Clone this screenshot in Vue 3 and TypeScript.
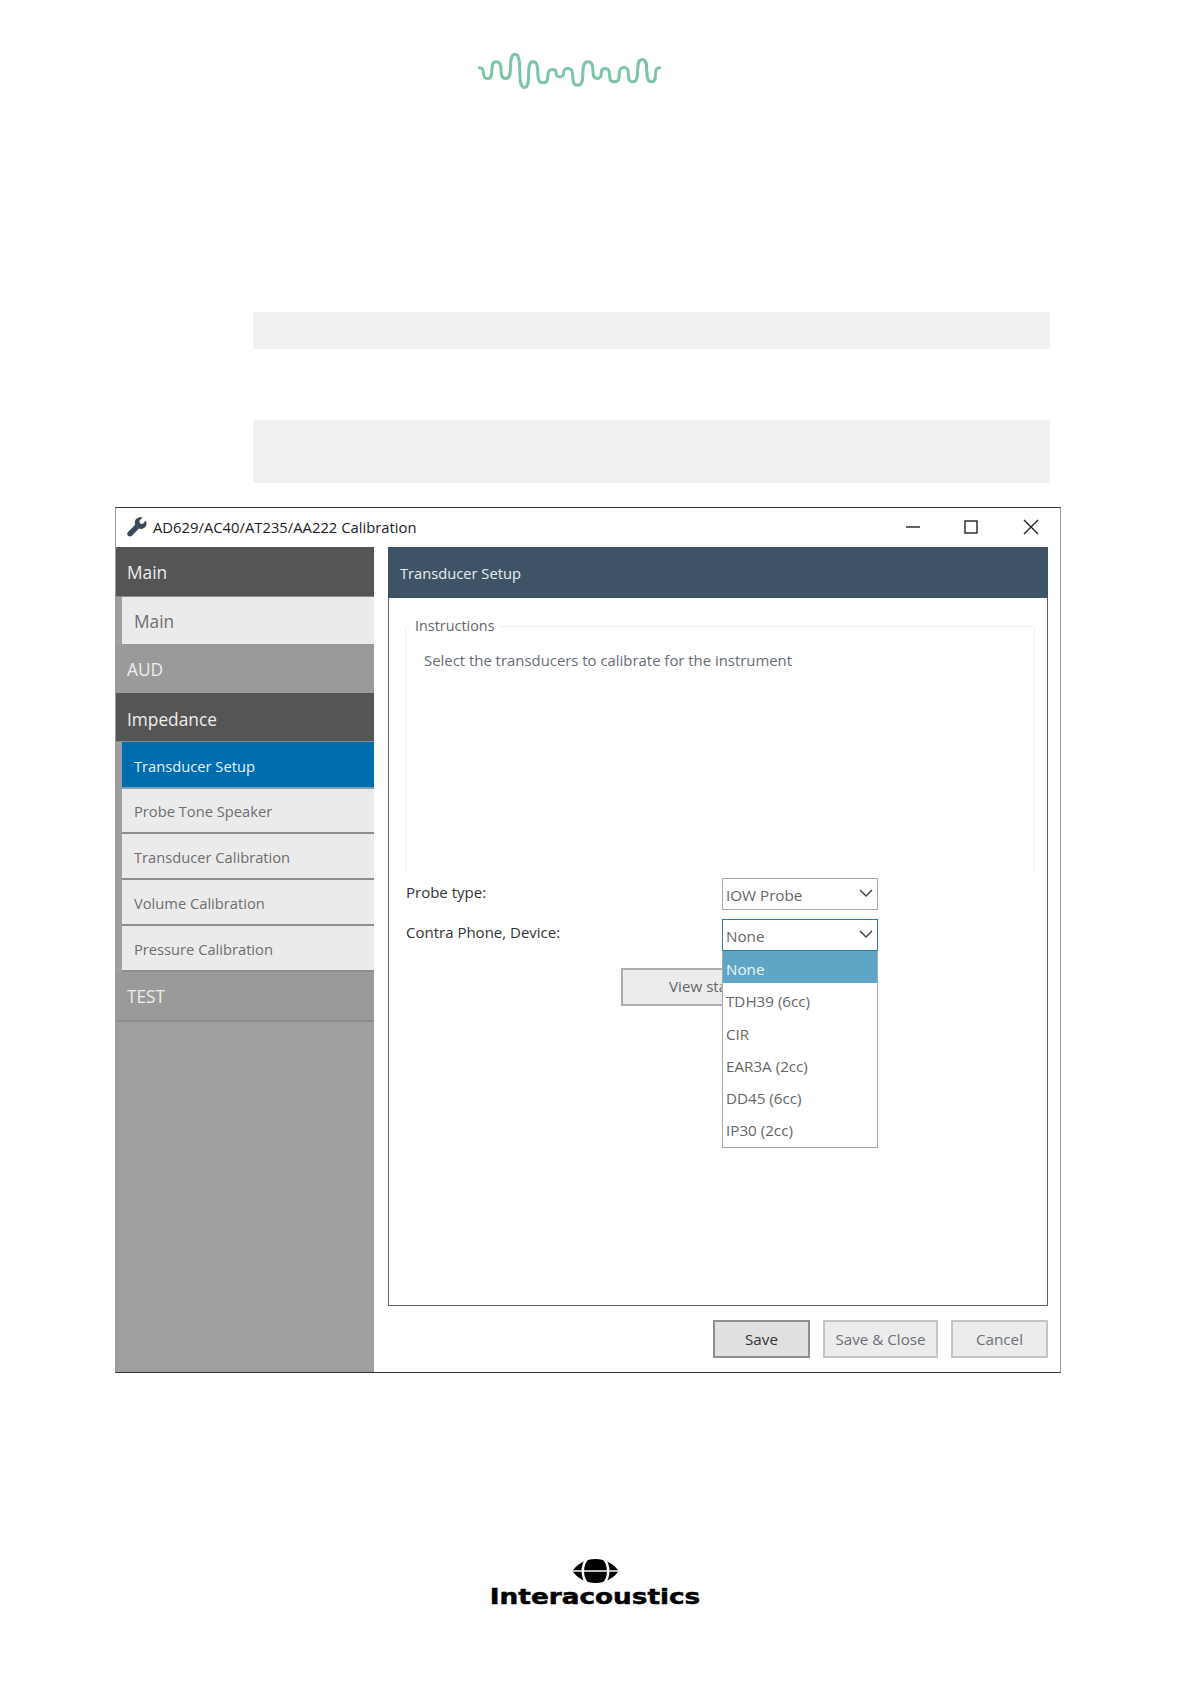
<script setup lang="ts">
const navItems = [
  { label: 'Main', kind: 'head' },
  { label: 'Main', kind: 'item big', h: 48 },
  { label: 'AUD', kind: 'group' },
  { label: 'Impedance', kind: 'head imp' },
  { label: 'Transducer Setup', kind: 'item active', h: 47 },
  { label: 'Probe Tone Speaker', kind: 'item', h: 45 },
  { label: 'Transducer Calibration', kind: 'item', h: 46 },
  { label: 'Volume Calibration', kind: 'item', h: 46 },
  { label: 'Pressure Calibration', kind: 'item', h: 46 },
  { label: 'TEST', kind: 'group test' },
]
const options = ['None', 'TDH39 (6cc)', 'CIR', 'EAR3A (2cc)', 'DD45 (6cc)', 'IP30 (2cc)']

const wave: [number, number][] = [
  [115, 113], [140, 145], [165, 95], [195, 145], [222, 72], [250, 172], [275, 95], [305, 158],
  [335, 118], [355, 140], [380, 115], [410, 165], [440, 95], [470, 145], [490, 115], [520, 155],
  [548, 112], [575, 155], [603, 88], [630, 155], [655, 113],
]
const wavePath = wave.reduce((d, [x, y], i) => {
  if (i === 0) return `M${x} ${y}`
  const [px, py] = wave[i - 1]
  const k = (x - px) * 0.95
  return `${d} C${px + k} ${py} ${x - k} ${y} ${x} ${y}`
}, '')
</script>

<template>
  <div class="page">
    <header class="top">
      <svg class="wave" viewBox="105 60 560 122" aria-hidden="true">
        <path :d="wavePath" fill="none" stroke="#7cc5a6" stroke-width="9" stroke-linecap="round" />
      </svg>
    </header>

    <div class="shade shade-a"></div>
    <div class="shade shade-b"></div>

    <section class="win">
      <div class="titlebar">
        <svg class="wrench" viewBox="0 0 24 24" aria-hidden="true">
          <path fill="#3c4a57" d="M22.6 4.6 18.7 8.5 15.6 7.7 14.8 4.6 18.7.7C16.2-.3 13.3.2 11.3 2.2 9.4 4.1 8.9 6.9 9.8 9.3L1.2 17.9C-.1 19.2-.1 21.2 1.2 22.5 2.5 23.8 4.5 23.8 5.8 22.5L14.4 13.9C16.8 14.8 19.6 14.3 21.5 12.4 23.5 10.4 24 7.1 22.6 4.6Z" />
        </svg>
        <span class="title">AD629/AC40/AT235/AA222 Calibration</span>
        <div class="winbtns">
          <svg viewBox="0 0 14 14"><path d="M0 7H14" /></svg>
          <svg viewBox="0 0 14 14"><rect x="1" y="1" width="12" height="12" /></svg>
          <svg class="close" viewBox="0 0 14 14"><path d="M0 0 14 14M14 0 0 14" /></svg>
        </div>
      </div>

      <div class="body">
        <nav class="side">
          <div
            v-for="(n, i) in navItems"
            :key="i"
            :class="['nav', n.kind]"
            :style="n.h ? { height: n.h + 'px' } : undefined"
          >
            <span>{{ n.label }}</span>
          </div>
        </nav>

        <div class="right">
          <div class="panel">
            <div class="panel-head">Transducer Setup</div>
            <div class="panel-body">
              <fieldset class="instr">
                <legend>Instructions</legend>
                <p>Select the transducers to calibrate for the instrument</p>
              </fieldset>

              <div class="rows">
                <div class="row">
                  <label>Probe type:</label>
                  <div class="select"><span>IOW Probe</span>
                    <svg viewBox="0 0 14 8"><path d="M1 1 7 7 13 1" /></svg>
                  </div>
                </div>
                <div class="row second">
                  <label>Contra Phone, Device:</label>
                  <div class="select open"><span>None</span>
                    <svg viewBox="0 0 14 8"><path d="M1 1 7 7 13 1" /></svg>
                    <ul class="menu">
                      <li v-for="(o, i) in options" :key="o" :class="{ sel: i === 0 }">{{ o }}</li>
                    </ul>
                  </div>
                </div>
                <button class="view">View status</button>
              </div>
            </div>
          </div>

          <div class="actions">
            <button class="btn save">Save</button>
            <button class="btn sc">Save &amp; Close</button>
            <button class="btn cancel">Cancel</button>
          </div>
        </div>
      </div>
    </section>

    <footer class="brand">
      <svg class="globe" viewBox="0 0 48 25" aria-hidden="true">
        <path fill="#000" d="M24 0C35 0 44 6 48 12.5 44 19 35 25 24 25 13 25 4 19 0 12.5 4 6 13 0 24 0Z" />
        <path fill="none" stroke="#fff" stroke-width="2.6" d="M16 -1C9 6 9 19 16 26M32 -1C39 6 39 19 32 26" />
        <path stroke="#fff" stroke-width="1.6" d="M0 12.5H48" />
      </svg>
      <div class="word">Interacoustics</div>
    </footer>
  </div>
</template>

<style>
html, body { margin: 0; background: #fff; }
</style>

<style scoped>
.page {
  width: 1191px;
  height: 1684px;
  background: #fff;
  overflow: hidden;
  font-family: "Open Sans", "Noto Sans", sans-serif;
  display: flex;
  flex-direction: column;
  align-items: center;
}
.top { height: 312px; width: 100%; position: relative; display: flex; padding-top: 50px; box-sizing: border-box; }
.wave { width: 187px; height: 41px; margin-left: 476px; }
.shade { width: 797px; background: #f1f1f1; margin-left: 111px; flex: none; }
.shade-a { height: 37px; }
.shade-b { height: 63px; margin-top: 71px; }

.win {
  margin-top: 24px;
  margin-left: -15px;
  width: 946px;
  height: 866px;
  box-sizing: border-box;
  border: 1px solid #9a9a9a;
  border-top-color: #30383a;
  border-bottom-color: #30383a;
  background: #fff;
  display: flex;
  flex-direction: column;
  flex: none;
}
.titlebar { height: 39px; display: flex; align-items: center; padding: 0 0 2px 10px; box-sizing: border-box; flex: none; }
.wrench { width: 22px; height: 20px; margin-right: 5px; }
.title { font-size: 14.8px; color: #222; }
.winbtns { margin-left: auto; display: flex; gap: 44px; padding-right: 22px; align-items: center; }
.winbtns svg { width: 14px; height: 14px; display: block; fill: none; stroke: #222; stroke-width: 1.4; overflow: visible; }
.winbtns .close { margin-left: 2px; }

.body { flex: 1; display: flex; min-height: 0; }
.side { width: 258px; background: #9f9f9f; flex: none; display: flex; flex-direction: column; }
.nav { display: flex; align-items: center; box-sizing: border-box; flex: none; }
.head { height: 50px; background: #555; color: #eee; font-size: 17.3px; padding: 2px 0 0 11px; border-bottom: 1px solid #8a8a8a; }
.head.imp { height: 49px; padding-top: 4px; }
.group { height: 48px; background: #9a9a9a; color: #eee; font-size: 17.3px; padding: 1px 0 0 11px; }
.group.test { height: 50px; border-bottom: 2px solid #8d8d8d; padding-top: 0; }
.item {
  margin-left: 6px;
  background: #ebebeb;
  color: #6e6e6e;
  font-size: 14.7px;
  padding: 1px 0 0 12px;
  border-bottom: 2px solid #8e8e8e;
}
.item.big { font-size: 17.3px; border-bottom: 1px solid #999; padding-top: 1px; }
.item.active { background: #006db0; color: #e8f2f8; border-bottom-color: #7f9fb5; padding-top: 2px; }

.right { flex: 1; min-width: 0; display: flex; flex-direction: column; padding: 0 12px 0 14px; }
.panel {
  height: 759px;
  box-sizing: border-box;
  border: 1px solid #5c6470;
  border-top: 0;
  display: flex;
  flex-direction: column;
  flex: none;
}
.panel-head {
  height: 51px;
  background: #3f5366;
  color: #e9edf1;
  font-size: 14.7px;
  display: flex;
  align-items: center;
  padding-left: 12px;
  margin: 0 -1px;
  flex: none;
}
.panel-body { padding: 18px 12px 0 16px; flex: 1; min-height: 0; }
.instr {
  margin: 0;
  height: 258px;
  box-sizing: border-box;
  border: 1px solid #eee;
  border-bottom: 0;
  border-radius: 2px;
  padding: 0 8px;
  padding-inline: 18px 8px;
}
.instr legend { font-size: 14.4px; color: #666; padding: 0 5px; margin-left: -14px; line-height: 20px; }
.instr p { margin: 14px 0 0; font-size: 14.9px; line-height: 20px; color: #666e78; }

.rows { position: relative; padding-top: 4px; }
.row { display: flex; align-items: flex-start; height: 41px; }
.row label { width: 317px; font-size: 15px; line-height: 20px; color: #333; padding: 4px 0 0 1px; box-sizing: border-box; }
.row.second label { padding-top: 3px; }
.select {
  position: relative;
  width: 156px;
  height: 32px;
  box-sizing: border-box;
  border: 1px solid #a8a8a8;
  display: flex;
  align-items: center;
  justify-content: space-between;
  padding: 0 4px 0 3px;
  font-size: 15.2px;
  color: #666;
  background: #fff;
}
.select svg { width: 14px; height: 8px; fill: none; stroke: #444; stroke-width: 1.5; display: block; overflow: visible; margin-top: -2px; }
.select span { padding-top: 2px; }
.select.open { border-color: #2c7eab; }
.menu {
  position: absolute;
  z-index: 2;
  left: -1px;
  top: 31px;
  width: 156px;
  box-sizing: border-box;
  margin: 0;
  padding: 0 0 2px;
  list-style: none;
  background: #fff;
  border: 1px solid #a8a8a8;
  border-top: 0;
}
.menu li { height: 32.3px; line-height: 36px; padding-left: 3px; font-size: 15.2px; color: #666; }
.menu li.sel { background: #5fa6c6; color: #eef6fa; }

.view {
  display: block;
  margin: 8px 0 0 216px;
  width: 180px;
  height: 38px;
  box-sizing: border-box;
  background: #ececec;
  border: 2px solid #adadad;
  font: inherit;
  font-size: 15.2px;
  color: #666;
  text-align: left;
  padding: 0 0 2px 46px;
}

.actions { display: flex; justify-content: flex-end; padding-top: 14px; }
.btn {
  height: 38px;
  box-sizing: border-box;
  background: #ececec;
  border: 2px solid #c4c4c4;
  font: inherit;
  font-size: 15.2px;
  color: #6b7078;
  padding: 0;
}
.btn.save { width: 97px; background: #e0e0e0; border-color: #8f8f8f; color: #333; }
.btn.sc { width: 115px; margin-left: 13px; }
.btn.cancel { width: 97px; margin-left: 13px; }

.brand { margin-top: 186px; display: flex; flex-direction: column; align-items: center; margin-left: -1px; }
.globe { width: 47px; height: 24px; display: block; }
.word {
  font-family: "DejaVu Sans", sans-serif;
  font-weight: 700;
  font-size: 22px;
  line-height: 22px;
  margin-top: 3px;
  color: #000;
  -webkit-text-stroke: 0.5px #000;
  transform: scaleX(1.195);
}
</style>
